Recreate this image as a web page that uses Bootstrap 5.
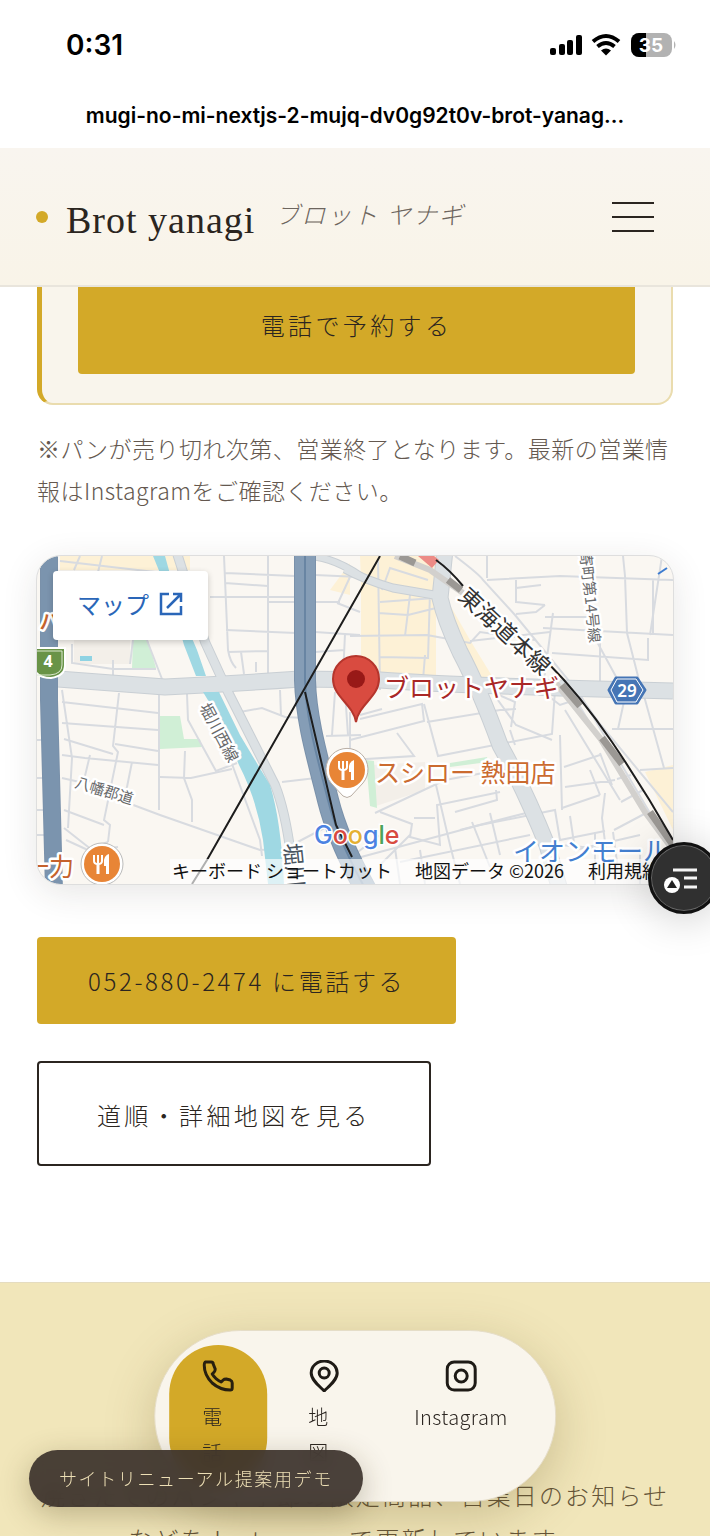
<!DOCTYPE html>
<html lang="ja">
<head>
<meta charset="utf-8">
<meta name="viewport" content="width=device-width, initial-scale=1">
<title>Brot yanagi ブロット ヤナギ</title>
<link rel="stylesheet" href="https://cdn.jsdelivr.net/npm/bootstrap@5.3.0/dist/css/bootstrap.min.css">
<style>
:root{--gold:#d3a928;--ink:#2b2520;--cream:#f9f5ec;--sand:#f1e6ba}
body{font-family:"Noto Sans CJK JP",sans-serif;font-weight:300;color:var(--ink);background:#fff;overflow:hidden}
.page-shell{height:100vh;overflow:hidden}
.ui-font{font-family:Inter,sans-serif;color:#000}
.status-row{height:90px;padding:0 34px 0 66px}
.status-time{font-size:28px;font-weight:600}
.url-row{height:58px;font-size:21px;font-weight:600;line-height:52px}
.site-head{height:139px;padding:0 56px 0 36px;background:linear-gradient(#f9f5ef,#f9f4e8);border-bottom:2px solid #e9e5dc}
.brand-dot{width:12px;height:12px;border-radius:50%;background:var(--gold);margin-right:18px}
.brand-name{font-family:"Liberation Serif",serif;font-size:38px;letter-spacing:1px;font-weight:400;margin-right:20px;margin-top:8px}
.brand-kana{font-size:24px;font-style:italic;color:#6d655e;letter-spacing:2px;margin-bottom:6px}
.menu-btn{width:42px;height:30px}
.menu-btn i{display:block;height:2px;background:var(--ink)}
.wrap{padding:0 37px}
.reserve-box{border:2px solid #eadcae;border-left:5px solid var(--gold);border-top:0;border-radius:0 0 16px 16px;background:var(--cream);padding:0 36px 29px}
.cta{font-size:24px;letter-spacing:.14em;font-weight:300;line-height:36px;border-radius:4px;color:var(--ink);border:0}
.cta:hover{color:var(--ink)}
.cta-gold,.cta-gold:hover{background:var(--gold)}
.cta-reserve{border-radius:0 0 4px 4px;padding:20px 0 31px}
.cta-phone{padding:26px 51px 25px;letter-spacing:.11em}
.cta-route{border:2px solid var(--ink);padding:34px 58px 31px}
.notice{font-size:23px;line-height:42px;letter-spacing:.02em;color:#64584f;margin:22px 0 45px}
.map-box{border-radius:24px;overflow:hidden;box-shadow:0 8px 36px rgba(50,40,30,.12);margin-bottom:53px;outline:1px solid #dedede;background:#faf7f2}
.map-svg{display:block;width:100%;height:auto}
.map-link{top:15px;left:16px;background:#fff;color:#2a66b8;padding:0 24px 4px;height:69px;font-size:24px;font-weight:400;border-radius:4px;box-shadow:0 2px 6px rgba(0,0,0,.2)}
.cta-list{gap:37px;margin-bottom:116px}
.news{background:var(--sand);padding:190px 20px 0;font-size:24px;letter-spacing:.09em;line-height:44px;color:#655538;border-top:1px solid #e5dcc0}
.dock{bottom:34px;left:50%;transform:translateX(-50%);height:172px;padding:14px;gap:8px;border-radius:86px;background:#f9f5ec;border:1px solid #e5ddc8;box-shadow:0 14px 50px rgba(90,70,20,.25)}
.dock a{color:var(--ink);text-decoration:none;padding:15px 33px 0;border-radius:49px;font-size:20px;letter-spacing:.02em;line-height:36px;gap:7px}
.dock a.on{background:var(--gold)}
.dock .narrow{width:32px;word-break:break-all}
.demo-tag{left:29px;bottom:29px;height:57px;padding:0 30px;border-radius:29px;background:rgba(60,51,44,.93);backdrop-filter:blur(8px);color:#eddfb5;font-size:18px;letter-spacing:.09em;line-height:57px;box-shadow:0 8px 30px rgba(70,55,20,.3)}
.float-btn{right:-10px;bottom:622px;width:72px;height:72px;border-radius:50%;background:#303030;border:3px solid #111;box-shadow:0 4px 44px rgba(0,0,0,.2),inset 0 0 0 1px #666}
.lbl{font-family:"Noto Sans CJK JP",sans-serif;paint-order:stroke;stroke:#fff;stroke-width:5px;stroke-linejoin:round}
.lbl-foot{font-family:"Noto Sans CJK JP",sans-serif;font-size:18px;font-weight:400;fill:#111}
</style>
</head>
<body>
<div class="page-shell d-flex flex-column">
  <div class="status-row ui-font d-flex align-items-center justify-content-between flex-shrink-0">
    <span class="status-time">0:31</span>
    <svg width="128" height="28" viewBox="548 31 128 28" role="img" aria-label="電波、Wi-Fi、電池残量35%">
      <rect x="550" y="48" width="6" height="7" rx="2"/><rect x="559" y="44" width="6" height="11" rx="2"/><rect x="567" y="40" width="6" height="15" rx="2"/><rect x="576" y="35" width="6" height="20" rx="2"/>
      <g fill="none" stroke="#000" stroke-width="4"><path d="M593 41.500 Q606 30.500 619 41.500"/><path d="M597.500 46.500 Q606 39.500 614.500 46.500"/></g><path d="M606 55.500 L601 50.500 Q606 46.500 611 50.500Z"/>
      <clipPath id="bat"><rect x="631" y="33" width="41" height="24" rx="8"/></clipPath>
      <g clip-path="url(#bat)"><rect x="631" y="33" width="41" height="24" fill="#b2b2b2"/><rect x="631" y="33" width="15" height="24"/></g>
      <path d="M674 41 q3 4 0 8z" fill="#b2b2b2"/>
      <text x="651" y="52" text-anchor="middle" font-size="19" font-weight="700" fill="#fff" font-family="Inter">35</text>
    </svg>
  </div>
  <div class="url-row ui-font text-center text-nowrap flex-shrink-0">mugi-no-mi-nextjs-2-mujq-dv0g92t0v-brot-yanag...</div>

  <header class="site-head d-flex align-items-center justify-content-between flex-shrink-0">
    <a href="#" class="d-flex align-items-center text-decoration-none text-reset">
      <span class="brand-dot"></span><span class="brand-name">Brot yanagi</span><span class="brand-kana">ブロット ヤナギ</span>
    </a>
    <button class="menu-btn btn p-0 border-0 rounded-0 d-flex flex-column justify-content-between align-items-stretch" type="button" aria-label="メニュー"><i></i><i></i><i></i></button>
  </header>

  <main class="wrap flex-shrink-0">
    <div class="reserve-box"><button type="button" class="btn cta cta-gold cta-reserve w-100">電話で予約する</button></div>
    <p class="notice">※パンが売り切れ次第、営業終了となります。最新の営業情報はInstagramをご確認ください。</p>

    <div class="map-box position-relative">
      <svg class="map-svg" viewBox="37 556 636 328" role="img" aria-label="ブロットヤナギ周辺の地図">
        <rect x="37" y="556" width="636" height="328" fill="#faf7f2"/>
        <g fill="#fdf1d6"><path d="M60 556H190V570H60Z"/><path d="M360 556H436V675H361V580Z"/><path d="M450 605L470 640 492 676 478 680 450 625Z"/><path d="M350 563L330 590 350 595Z"/><path d="M645 772L673 765V830Z"/></g>
        <g fill="#f3efe9"><path d="M74 640H130V664H74Z"/><path d="M372 765L425 762 425 790 376 806Z"/></g>
        <g fill="#d0efd6"><path d="M133 640H148L156 668H132Z"/><path d="M160 716H180L184 739H200L202 747 160 749Z"/><path d="M366 760L374 761 377 808 370 806Z"/><path d="M450 763L487 757 488 762 450 767Z"/></g>
        <path d="M80 656h12v5H80z" fill="#8fd3e3"/>
        <g fill="none" stroke="#d8dbe0" stroke-width="2">
          <path d="M60 561L155 572M80 556L74 570M98 572L102 556M72 644V663L113 669 156 669M113 660V680M143 630L162 679M133 640L130 664"/>
          <path d="M224 556L228 650Q230 662 236 668M268 556V674M225 573L295 576M225 583L268 586M210 597H294M269 602H294M226 630L296 633M228 652L268 651M241 652L244 674M256 662V672"/>
          <path d="M315 575L360 577M315 602H340M338 603L350 577M337 603L360 612M315 632L360 635M345 634L343 676M315 652L345 650"/>
          <path d="M62 690L72 758 68 828M62 702L158 713M62 723L158 730M119 693L113 746 118 752 104 820 110 825 108 842M159 694L159 810M187 694L188 720 216 771 237 763M115 744L158 751M64 739L113 754M62 755L85 758 158 765M90 755L84 780 104 785M132 762L126 792M62 778L84 783"/>
          <path d="M160 777L191 778 232 769M185 751L184 778 192 800 192 822M120 800L160 815 260 850 290 848M64 810L104 825M64 828L92 850 118 847M66 840L90 851M232 764L260 840 262 856M108 842L86 850"/>
          <path d="M240 712L262 708 285 717 305 718M280 690L281 716M282 782L316 778M292 845L330 825M37 740H45M37 778H45M37 810H45M37 835H45M37 652H48M326 736L361 735M335 692L332 735M345 692L348 735M350 712V780"/>
          <path d="M350 636L427 635 470 643 480 632 535 640M378 560L380 690M378 613L408 615 440 607M410 595L405 636M380 602L435 598M380 657L428 658 430 592M425 655L423 680M470 641L550 632M382 590L390 568 428 580"/>
          <path d="M455 556Q480 575 483 580L515 615 570 682 600 724 673 812M487 580L560 576 673 580M487 556V578M516 580V603M516 588L541 585M516 602L545 605M545 617H598M516 614L536 612 545 605M543 628L673 635M553 613L544 680M552 653L648 660 648 638M650 635L662 556M653 580V634M596 640L620 684M625 576L627 633 640 684M600 630V690M623 556L625 576"/>
          <path d="M360 719L422 704 424 721 350 740M424 704L438 756 552 734 555 690M382 709L360 715M397 733L414 756 350 760M427 722L500 710 516 709M492 692L516 725 552 740M490 691L515 702 511 727M510 730L515 745M560 735L562 810M565 710L620 800M564 767L600 755M565 787L615 780M547 695L560 705 575 700"/>
          <path d="M612 729H673M625 697L618 729M644 696L664 768M600 753L612 785M590 770L600 795M617 779L631 775M640 770L673 768M621 802L643 790M614 830L648 812M605 793L602 818 606 850M605 831L560 840 555 810 480 825 350 860M562 808L600 795"/>
          <path d="M375 813L445 780 500 770M380 812L412 824 410 837 440 845 437 805 500 792M436 785L450 845 460 884M455 812L497 800 496 790M414 818H435M410 835L380 865M460 830L530 812M472 822L490 867M490 813L500 855M350 858L380 835M395 848L400 884M400 862L530 835M570 816L575 850 640 835M595 832V884M560 845L640 852M420 850L425 884M613 832L618 870M640 850V884"/>
          <path d="M570 690L612 760 648 815M575 686L660 830"/>
        </g>
        <g fill="none" stroke-linejoin="round" stroke="#c9cfd4">
          <path d="M58 679Q110 683 165 687Q230 684 300 679L380 680Q430 684 560 688L673 691" stroke-width="17"/>
          <path d="M445 550L440 598Q445 620 460 652Q480 690 500 745Q525 790 547 845L560 890" stroke-width="17"/>
          <path d="M345 569Q365 580 393 588L440 596" stroke-width="9"/>
          <path d="M176 550L205 642 228 692 275 785Q285 810 291 855" stroke-width="10"/>
          <path d="M310 556Q335 558 362 577" stroke-width="8"/>
        </g>
        <g fill="none" stroke-linejoin="round" stroke="#dce1e4">
          <path d="M58 679Q110 683 165 687Q230 684 300 679L380 680Q430 684 560 688L673 691" stroke-width="15"/>
          <path d="M445 550L440 598Q445 620 460 652Q480 690 500 745Q525 790 547 845L560 890" stroke-width="15"/>
          <path d="M345 569Q365 580 393 588L440 596" stroke-width="7"/>
          <path d="M176 550L205 642 228 692 275 785Q285 810 291 855" stroke-width="8"/>
          <path d="M310 556Q335 558 362 577" stroke-width="6"/>
        </g>
        <path d="M153 556H165L180 610 197 650 206 676H196L184 645 171 600ZM203 692H219L240 735 270 785Q281 820 284 884H268L263 840Q257 800 239 765L220 720Z" fill="#9fd8e3"/>
        <g fill="none" stroke="#7a91aa"><path d="M49 550V700L54 890" stroke-width="18"/><path d="M305 550V680C306 720 318 760 328 800Q338 840 366 890" stroke-width="22"/></g>
        <g fill="none" stroke="#859db6"><path d="M49 550V700L54 890" stroke-width="16" stroke="#7b94ae"/><path d="M305 550V680C306 720 318 760 328 800Q338 840 366 890" stroke-width="20"/></g>
        <path d="M305 550V680C306 720 318 760 328 800Q338 840 366 890" fill="none" stroke="#6885a3" stroke-width="2"/>
        <path d="M395 556L430 570 463 593M555 682L600 738 645 812 673 850" fill="none" stroke="#d2d0cd" stroke-width="6"/>
        <path d="M400 556L415 563M448 580L461 590M562 685L580 706M602 738L622 764M650 812L673 845" fill="none" stroke="#9b9894" stroke-width="7"/>
        <path d="M418 556H434L439 560 432 568Z" fill="#ec8b86"/>
        <g fill="none" stroke="#1d1d1d" stroke-width="2"><path d="M380 556L207 860 192 884"/><path d="M305 692L336 825 352 857"/><path d="M436 560Q450 570 463 586M547 662Q580 695 612 742T673 840"/></g>
        <rect x="170" y="859" width="503" height="25" fill="#fff" opacity=".65"/>

        <g class="lbl" font-weight="400" fill="#68696b">
          <text transform="translate(199 707) rotate(62)" font-size="16">堀川西線</text>
          <text transform="translate(74 787) rotate(17)" font-size="15">八幡郡道</text>
          <text transform="translate(580 552) rotate(84)" font-size="15">寄町第14号線</text>
          <text transform="translate(457 598) rotate(43)" font-size="23" fill="#333">東海道本線</text>
        </g>
        <text class="lbl" transform="translate(284 844) rotate(84)" font-size="22" font-weight="400" fill="#4a5460">堀川</text>
        <text class="lbl" x="384" y="697" font-size="25" font-weight="400" fill="#a92727">ブロットヤナギ</text>
        <text class="lbl" x="375" y="782" font-size="25" font-weight="400" fill="#cb6b30">スシロー 熱田店</text>
        <text class="lbl" x="513" y="861" font-size="26" font-weight="400" fill="#437fd0">イオンモール</text>
        <text class="lbl" x="24" y="876" font-size="25" font-weight="400" fill="#c5622d">一力</text>
        <text class="lbl" x="39" y="629" font-size="22" font-weight="500" fill="#c5622d">ハ</text>
        <path d="M658 574l9-6" stroke="#3c7bd0" stroke-width="2"/>

        <path d="M35 648H65V665Q65 676 51 678Q35 678 33 665Z" fill="#699347" stroke="#fff" stroke-width="2"/><path d="M37 651H62V665Q62 674 50 675H37" fill="none" stroke="#dce8cf" stroke-width="1"/>
        <text x="48" y="667" text-anchor="middle" font-size="16" font-weight="700" fill="#fff" font-family="Noto Sans">4</text>
        <path d="M609 690L616 678H637L645 690 637 703H616Z" fill="#4575b5" stroke="#4575b5" stroke-width="3" stroke-linejoin="round"/><path d="M611 690L617 679H636L643 690 636 702H617Z" fill="none" stroke="#fff" stroke-width="1"/>
        <text x="627" y="697" text-anchor="middle" font-size="17" font-weight="600" fill="#fff" font-family="Noto Sans">29</text>

        <path d="M356 722C353 704 333 697 333 679A23 23 0 0 1 379 679C379 697 359 704 356 722Z" fill="#d94b40" stroke="#b5352c" stroke-width="2"/><circle cx="356" cy="679" r="9" fill="#981917"/>
        <path d="M331 783A21 21 0 1 1 363 783L351 796Q347 799 343 796Z" fill="#fff" stroke="#b9aea4" stroke-width="1"/><circle cx="347" cy="770" r="18" fill="#e88536"/>
        <g stroke="#fff" fill="none" stroke-width="2"><path d="M339 761v6q0 3 4 3t4-3v-6M343 761v9"/><path d="M343 769v11" stroke-width="3"/></g><path d="M354 760v20h-3v-8h-2v-6q1-5 5-6z" fill="#fff"/>
        <circle cx="102" cy="864" r="21" fill="#fff" stroke="#bbb" stroke-width="1"/><circle cx="102" cy="864" r="18" fill="#e88536"/>
        <g stroke="#fff" fill="none" stroke-width="2"><path d="M94 855v6q0 3 4 3t4-3v-6M98 855v9"/><path d="M98 863v11" stroke-width="3"/></g><path d="M109 854v20h-3v-8h-2v-6q1-5 5-6z" fill="#fff"/>
        <text x="314" y="844" font-size="25" font-weight="500" font-family="Inter" paint-order="stroke" stroke="#fff" stroke-width="3"><tspan fill="#4c83e2">G</tspan><tspan fill="#d84a40">o</tspan><tspan fill="#e5b132">o</tspan><tspan fill="#4c83e2">g</tspan><tspan fill="#4ca35b">l</tspan><tspan fill="#d84a40">e</tspan></text>
        <text class="lbl-foot" x="172" y="878">キーボード ショートカット</text>
        <text class="lbl-foot" x="415" y="878">地図データ ©2026</text>
        <text class="lbl-foot" x="588" y="878">利用規約</text>
      </svg>
      <a href="#" class="map-link position-absolute d-flex align-items-center gap-2 text-decoration-none">マップ
        <svg width="27" height="27" viewBox="0 0 27 27" fill="none" stroke="#2a66b8" stroke-width="2.500" aria-hidden="true"><path d="M12 4H4V24H24V16M16 4H24V12M24 4L10 18"/></svg></a>
    </div>

    <div class="cta-list d-flex flex-column align-items-start">
      <a href="tel:052-880-2474" class="btn cta cta-gold cta-phone">052-880-2474 に電話する</a>
      <a href="#" class="btn cta cta-route">道順・詳細地図を見る</a>
    </div>
  </main>

  <section class="news text-center flex-grow-1 text-nowrap">焼きたてのパンや季節の限定商品、営業日のお知らせ<br>などを Instagram で更新しています。</section>
</div>

<nav class="dock position-fixed d-flex">
  <a href="tel:052-880-2474" class="on d-flex flex-column align-items-center"><svg class="flex-shrink-0" width="32" height="32" viewBox="0 0 32 32" fill="none" stroke="#28200f" stroke-width="3" stroke-linejoin="round" aria-hidden="true"><path d="M3 2H9Q11 2 11 4L13 9Q13 11 12 12L10 14Q13 19 19 22L21 20Q22 19 24 19L28 20Q30 21 30 23V28Q30 30 28 30Q18 30 10 23Q2 15 2 5Q2 3 3 2Z"/></svg><span class="narrow">電話</span></a>
  <a href="#" class="d-flex flex-column align-items-center"><svg class="flex-shrink-0" width="32" height="32" viewBox="0 0 32 32" fill="none" stroke="#1f1b16" stroke-width="3" stroke-linejoin="round" aria-hidden="true"><path d="M16 31C11 26 3 20 3 13A13 12 0 0 1 29 13C29 20 21 26 16 31Z"/><circle cx="16" cy="13" r="5"/></svg><span class="narrow">地図</span></a>
  <a href="#" class="d-flex flex-column align-items-center"><svg class="flex-shrink-0" width="32" height="32" viewBox="0 0 32 32" fill="none" stroke="#1f1b16" stroke-width="3" aria-hidden="true"><rect x="2" y="2" width="28" height="28" rx="7"/><circle cx="16" cy="16" r="6"/></svg><span>Instagram</span></a>
</nav>
<div class="demo-tag position-fixed text-nowrap">サイトリニューアル提案用デモ</div>
<button type="button" class="float-btn position-fixed p-0" aria-label="ページメニュー">
  <svg class="d-block" width="66" height="66" viewBox="651 845 66 66" aria-hidden="true"><path d="M673 870H697M684 878H697M684 887H697" stroke="#f4f4f4" stroke-width="3"/><circle cx="672" cy="885" r="8" fill="#fff"/><path d="M672 880l5 8h-10z" fill="#222"/></svg>
</button>
<script src="https://cdn.jsdelivr.net/npm/bootstrap@5.3.0/dist/js/bootstrap.bundle.min.js"></script>
</body>
</html>
